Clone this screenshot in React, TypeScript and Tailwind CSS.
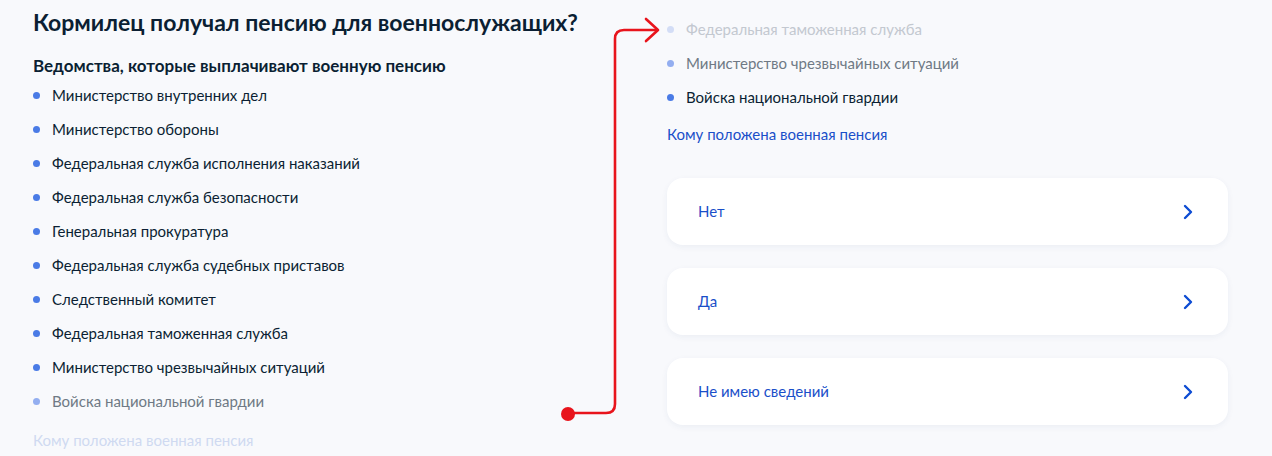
import React from "react";

const font = { fontFamily: "Lato, 'Noto Sans', sans-serif" };

type Tone = "normal" | "mid" | "faint";

const textTone: Record<Tone, string> = {
  normal: "text-[#0b1f33]",
  mid: "text-[#6f7985]",
  faint: "text-[#c3c8d0]",
};
const dotTone: Record<Tone, string> = {
  normal: "bg-[#4a7be6]",
  mid: "bg-[#93aef0]",
  faint: "bg-[#d3ddf6]",
};

function Item({ label, tone = "normal" }: { label: string; tone?: Tone }) {
  return (
    <li className="flex h-[34px] items-center gap-[12px]">
      <span className={`h-[7px] w-[7px] shrink-0 rounded-full ${dotTone[tone]}`} />
      <span className={`text-[15px] leading-5 ${textTone[tone]}`}>{label}</span>
    </li>
  );
}

function Chevron() {
  return (
    <svg width="12" height="16" viewBox="0 0 12 16" fill="none">
      <path d="M3 2l6 6-6 6" stroke="#0d4cd3" strokeWidth="2.4" strokeLinecap="round" strokeLinejoin="round" />
    </svg>
  );
}

function Option({ label }: { label: string }) {
  return (
    <button className="flex h-[67px] w-full items-center justify-between rounded-2xl bg-white pl-[31px] pr-[34px] text-left shadow-[0_2px_6px_rgba(30,60,120,0.06)]">
      <span className="text-[15px] text-[#1a4fc9]">{label}</span>
      <Chevron />
    </button>
  );
}

const agencies = [
  "Министерство внутренних дел",
  "Министерство обороны",
  "Федеральная служба исполнения наказаний",
  "Федеральная служба безопасности",
  "Генеральная прокуратура",
  "Федеральная служба судебных приставов",
  "Следственный комитет",
  "Федеральная таможенная служба",
  "Министерство чрезвычайных ситуаций",
];

export default function App() {
  return (
    <div style={font} className="relative flex h-[456px] w-[1272px] overflow-hidden bg-[#f8f9fc]">
      {/* first screen */}
      <section className="w-[667px] shrink-0 pl-[33px] pt-[8px]">
        <h1 className="text-[23px] font-bold leading-7 text-[#0b1f33]">
          Кормилец получал пенсию для военнослужащих?
        </h1>
        <h2 className="mt-[20px] text-[17px] font-bold leading-5 text-[#0b1f33]">
          Ведомства, которые выплачивают военную пенсию
        </h2>
        <ul className="mt-[2px]">
          {agencies.map((a) => (
            <Item key={a} label={a} />
          ))}
          <Item label="Войска национальной гвардии" tone="mid" />
        </ul>
        <a className="mt-[12px] block text-[15px] leading-5 text-[#cfd9f1]">Кому положена военная пенсия</a>
      </section>

      {/* scrolled screen */}
      <section className="w-[561px] shrink-0 pt-[12px]">
        <ul>
          <Item label="Федеральная таможенная служба" tone="faint" />
          <Item label="Министерство чрезвычайных ситуаций" tone="mid" />
          <Item label="Войска национальной гвардии" />
        </ul>
        <a className="mt-[10px] block text-[15px] leading-5 text-[#1a4fc9]">Кому положена военная пенсия</a>
        <div className="mt-[34px] flex flex-col gap-[23px]">
          <Option label="Нет" />
          <Option label="Да" />
          <Option label="Не имею сведений" />
        </div>
      </section>

      {/* connector arrow */}
      <svg className="absolute left-0 top-0" width="1272" height="456" fill="none">
        <path
          d="M568 413 H606 Q615 413 615 404 V39 Q615 30 624 30 H657"
          stroke="#e8141c"
          strokeWidth="2.6"
          strokeLinecap="round"
        />
        <path d="M646 19 L658 30 L646 41" stroke="#e8141c" strokeWidth="2.6" strokeLinecap="round" strokeLinejoin="round" />
        <circle cx="568" cy="414" r="7" fill="#e8141c" />
      </svg>
    </div>
  );
}
